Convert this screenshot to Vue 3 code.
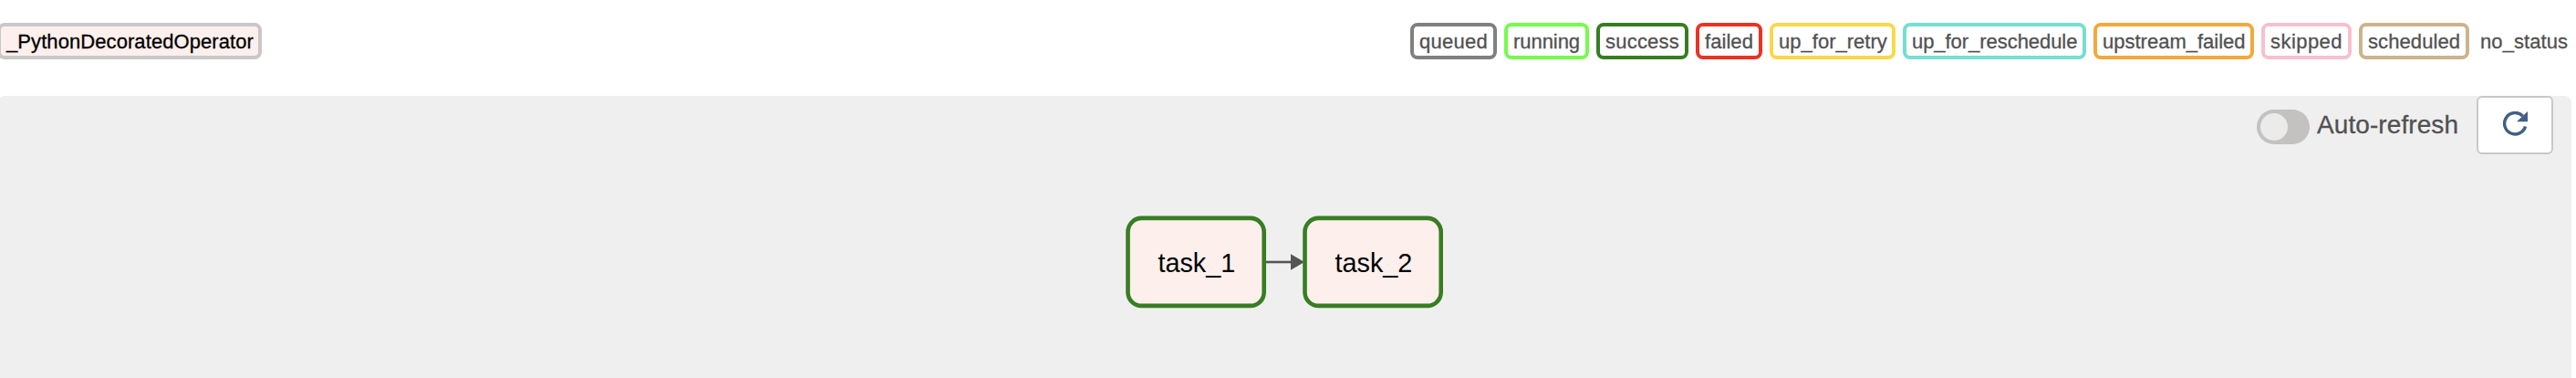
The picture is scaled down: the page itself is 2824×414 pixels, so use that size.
<script setup>
const states = [
  { name: 'queued', color: '#808080', width: 95, tracking: 0.26 },
  { name: 'running', color: '#75fb4c', width: 93, tracking: -0.05 },
  { name: 'success', color: '#377e22', width: 101, tracking: 0.22 },
  { name: 'failed', color: '#ea3323', width: 73, tracking: 0.06 },
  { name: 'up_for_retry', color: '#f9d849', width: 138, tracking: 0.02 },
  { name: 'up_for_reschedule', color: '#75decf', width: 201, tracking: -0.05 },
  { name: 'upstream_failed', color: '#f2a93b', width: 176, tracking: 0 },
  { name: 'skipped', color: '#f6c1cc', width: 99, tracking: 0.45 },
  { name: 'scheduled', color: '#cdb38d', width: 121, tracking: 0.1 },
  { name: 'no_status', color: '#ffffff', width: 115, tracking: 0.08 },
]
const tasks = [
  { name: 'task_1', x: 1236.5, labelX: 1269.4 },
  { name: 'task_2', x: 1430.5, labelX: 1463.5 },
]
</script>

<template>
  <div class="page">
    <header class="legend">
      <span class="badge operator">_PythonDecoratedOperator</span>
      <div class="states">
        <span
          v-for="s in states"
          :key="s.name"
          class="badge"
          :style="{ borderColor: s.color, width: s.width + 'px', letterSpacing: s.tracking + 'px' }"
        >{{ s.name }}</span>
      </div>
    </header>
    <main class="panel">
      <div class="controls">
        <span class="toggle"><span class="knob"></span></span>
        <span class="toggle-label">Auto-refresh</span>
        <button class="refresh" aria-label="Refresh">
          <svg width="28" height="28" viewBox="0 0 28 28">
            <path d="M21.6 5 A11.7 11.7 0 1 0 24.5 16.5" fill="none" stroke="#415f87" stroke-width="3.4" />
            <path d="M27 0 V11.3 H15 Z" fill="#415f87" />
          </svg>
        </button>
      </div>
      <svg class="graph" width="2824" height="309" viewBox="0 105 2824 309">
        <path d="M1388 287 H1417" stroke="#545454" stroke-width="2.6" />
        <path d="M1415 278.3 L1430 287 L1415 295.8 Z" fill="#545454" />
        <g v-for="t in tasks" :key="t.name">
          <rect :x="t.x" y="238.9" width="149.2" height="96" rx="15" fill="#fcefec" stroke="#377e22" stroke-width="4.6" />
          <text :x="t.labelX" y="297.8">{{ t.name }}</text>
        </g>
      </svg>
    </main>
  </div>
</template>

<style>
body {
  background: #fff;
  overflow: hidden;
}
</style>

<style scoped>
.page {
  width: 2824px;
  height: 414px;
  overflow: hidden;
  display: flex;
  flex-direction: column;
  font-family: "Liberation Sans", Arial, sans-serif;
  color: #515151;
  -webkit-text-stroke-width: 0.3px;
}
.legend {
  height: 80px;
  flex: none;
  padding-top: 25px;
  display: flex;
  justify-content: space-between;
}
.badge {
  box-sizing: border-box;
  flex: none;
  height: 40px;
  border: 4px solid;
  border-radius: 8px;
  padding: 0 6px;
  font-size: 22px;
  line-height: 33px;
  white-space: nowrap;
}
.operator {
  width: 290px;
  margin-left: -3px;
  border-color: #c8c8c8;
  background: #fcefec;
  color: #000;
  letter-spacing: 0.08px;
}
.states {
  display: flex;
  gap: 8px;
  margin-right: -6px;
}
.states .badge:last-child {
  padding-left: 0;
}
.panel {
  position: relative;
  width: 2822px;
  height: 309px;
  margin-left: -3px;
  background: #efefef;
  border-radius: 8px 8px 0 0;
}
.controls {
  display: flex;
  justify-content: flex-end;
  align-items: flex-start;
  padding-right: 20px;
}
.toggle {
  box-sizing: border-box;
  width: 58px;
  height: 38px;
  margin-top: 15px;
  padding: 4px;
  border-radius: 19px;
  background: #c3c2c1;
}
.knob {
  display: block;
  width: 30px;
  height: 30px;
  border-radius: 50%;
  background: #ebebeb;
}
.toggle-label {
  width: 155px;
  margin: 16px 20px 0 8px;
  font-size: 28px;
  line-height: 32px;
  letter-spacing: 0.08px;
  white-space: nowrap;
}
.refresh {
  box-sizing: border-box;
  width: 84px;
  height: 64px;
  padding: 15px 0 0 27px;
  border: 2px solid #c8c8c8;
  border-radius: 6px;
  background: #fff;
  display: flex;
}
.graph {
  position: absolute;
  left: 3px;
  top: 0;
  pointer-events: none;
}
.graph text {
  font-size: 28.8px;
  fill: #000;
  stroke: none;
}
</style>
